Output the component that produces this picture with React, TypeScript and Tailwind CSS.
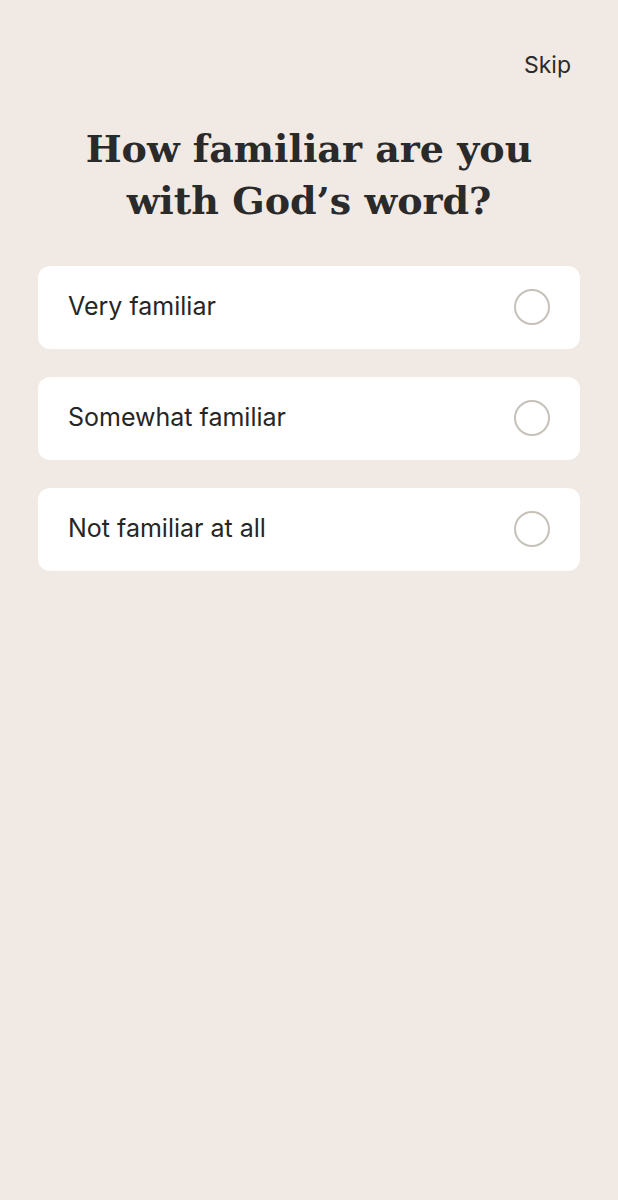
import React from "react";

const options = ["Very familiar", "Somewhat familiar", "Not familiar at all"];

export default function App() {
  return (
    <div className="min-h-[1200px] w-full bg-[#f1e9e3] px-[38px]" style={{ fontFamily: "Inter, 'Noto Sans', sans-serif" }}>
      <div className="flex justify-end pt-[48px] pr-[9px]">
        <span className="text-[23px] text-[#2b2b2b]">Skip</span>
      </div>
      <h1
        className="mt-[40px] text-center text-[38px] leading-[52px] font-bold text-[#2a2a2a]"
        style={{ fontFamily: "'DejaVu Serif', 'Liberation Serif', serif" }}
      >
        How familiar are you
        <br />
        with God’s word?
      </h1>
      <div className="mt-[39px] flex flex-col gap-[28px]">
        {options.map((o) => (
          <div key={o} className="flex h-[83px] items-center justify-between rounded-[12px] bg-white pl-[30px] pr-[30px]">
            <span className="text-[25px] text-[#262626]">{o}</span>
            <span className="h-[36px] w-[36px] rounded-full border-2 border-[#c6c2ba]" />
          </div>
        ))}
      </div>
    </div>
  );
}
